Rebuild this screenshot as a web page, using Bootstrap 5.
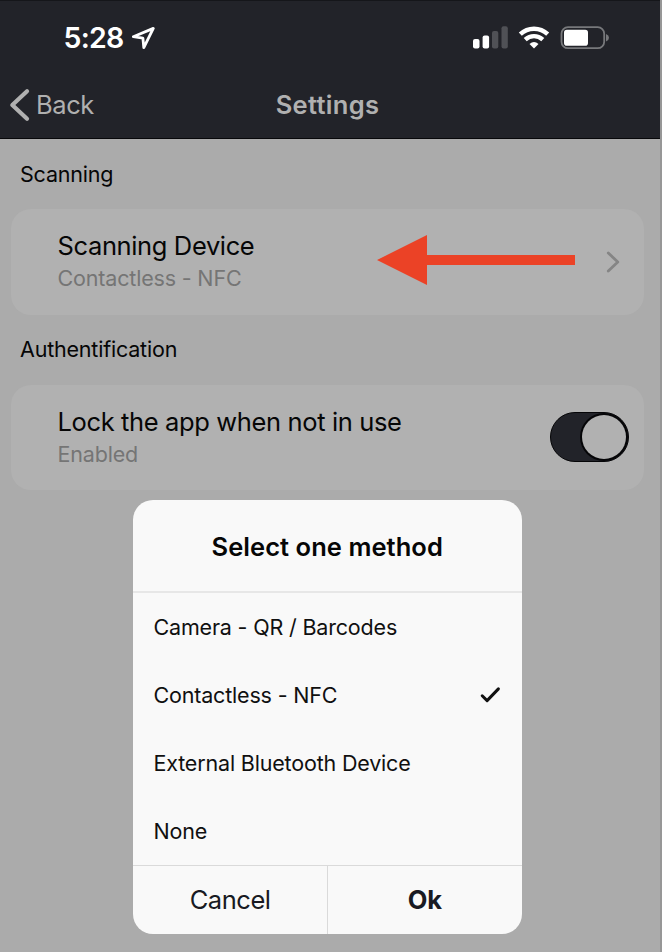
<!DOCTYPE html>
<html lang="en">
<head>
<meta charset="utf-8">
<meta name="viewport" content="width=device-width, initial-scale=1">
<title>Settings</title>
<link href="https://cdn.jsdelivr.net/npm/bootstrap@5.3.0/dist/css/bootstrap.min.css" rel="stylesheet">
<style>
  body { font-family: Inter, "Liberation Sans", sans-serif; background: #ababab; color: #060606; overflow: hidden; }
  .screen { height: 952px; border-right: 2px solid #979797; }
  .topbar { height: 139px; background: #222329; border-top: 1px solid #15161a; border-bottom: 1px solid #08080a; }
  .status { height: 73px; padding: 0 51px 0 63.5px; color: #fff; }
  .clock { font-size: 28.5px; line-height: 40px; font-weight: 600; letter-spacing: -.75px; }
  .indicators { gap: 9px; }
  .titlebar { height: 62px; grid-template-columns: 1fr auto 1fr; padding: 0 14px 0 9px; color: #b0b0b0; line-height: 40px; }
  .titlebar .back { font-size: 25.5px; letter-spacing: -.4px; }
  .titlebar .back span { padding-left: 6px; }
  .titlebar h1 { font-size: 25.5px; line-height: 40px; font-weight: 600; letter-spacing: .32px; }
  .section-label { height: 70px; padding: 0 20px; font-size: 21.5px; letter-spacing: -.2px; }
  .option { height: 105.5px; margin: 0 16px 0 10.5px; padding: 0 15.5px 0 47px; background: #b1b1b1; border-radius: 20px; }
  .option h2 { font-size: 25.5px; line-height: 33px; font-weight: 400; letter-spacing: -.37px; }
  .option p { font-size: 21.5px; line-height: 32px; color: #757575; letter-spacing: -.17px; }
  .option .chevron { margin-right: 6px; }
  .toggle { width: 79px; height: 50px; margin-bottom: 1px; border-radius: 25px; background: #222329; border: 1.5px solid #050507; padding-right: 1.5px; }
  .knob { width: 44.5px; height: 44.5px; border-radius: 50%; background: #b1b1b1; box-shadow: 0 0 0 2px #050507; }
  .pointer { left: 377px; top: 235px; }
  .dialog { left: 133px; top: 500px; width: 388.5px; height: 434px; background: #f9f9f9; border-radius: 20px; overflow: hidden; }
  .dialog h3 { height: 93px; padding-top: 3px; font-size: 25.5px; font-weight: 600; border-bottom: 2px solid #e7e7e7; letter-spacing: .05px; }
  .choice { height: 68.25px; padding: 0 21px 1px 20.5px; font-size: 21.5px; color: #101010; letter-spacing: -.18px; }
  .actions { border-top: 1px solid #dadada; margin-top: -1px; }
  .actions button { font-size: 25.5px; background: none; border: 0; color: #181a22; letter-spacing: -.45px; }
  .actions button + button { border-left: 1px solid #dadada; font-weight: 700; letter-spacing: 0; }
</style>
</head>
<body>
<div class="screen position-relative">
  <header class="topbar">
    <div class="status d-flex align-items-center">
      <span class="clock">5:28</span>
      <svg class="ms-1 ps-1" width="28" height="24" viewBox="0 0 24 24" fill="none" stroke="#fff" stroke-width="2.8" stroke-linejoin="round"><path d="M21.3 2.400 1.300 10.700l9.600 1.400.9 9.600z"/></svg>
      <div class="indicators d-flex align-items-center ms-auto">
        <svg width="36" height="24" viewBox="0 0 36 24"><g fill="#fff"><rect y="13" width="6.500" height="9.500" rx="2"/><rect x="9.600" y="9.500" width="6.500" height="13" rx="2"/></g><g fill="#505156"><rect x="19" y="5" width="6.300" height="17.500" rx="2"/><rect x="28.500" y=".3" width="6.300" height="22.200" rx="2"/></g></svg>
        <svg width="32" height="24" viewBox="0 0 32 24"><g fill="none" stroke="#fff" stroke-width="4.400"><path d="M2.300 8.200C10 .9 22 .9 29.700 8.200"/><path d="M7.200 13.700c5.200-4.800 12.400-4.800 17.600 0"/></g><path d="M11.500 18q4.500-3.800 9 0L16 22.500z" fill="#fff"/></svg>
        <svg width="50" height="24" viewBox="0 0 50 24"><rect x="2.500" y="1.200" width="42.700" height="21" rx="6.500" fill="none" stroke="#77787b" stroke-width="1.800"/><rect x="5" y="3.700" width="24" height="16" rx="2.800" fill="#fff"/><path d="M47 8v7.500q3-1.200 3-3.700t-3-3.800z" fill="#77787b"/></svg>
      </div>
    </div>
    <nav class="titlebar d-grid align-items-center">
      <a class="back d-flex align-items-center text-reset text-decoration-none" href="#">
        <svg width="21" height="34" viewBox="0 0 21 34" fill="none" stroke="#b0b0b0" stroke-width="4.200" stroke-linecap="round" stroke-linejoin="round"><path d="M18 3.300 3.300 17 18 30.700"/></svg>
        <span>Back</span>
      </a>
      <h1 class="m-0">Settings</h1>
    </nav>
  </header>
  <main>
    <div class="section-label d-flex align-items-center"><span>Scanning</span></div>
    <section class="option d-flex align-items-center justify-content-between">
      <div><h2 class="m-0">Scanning Device</h2><p class="m-0">Contactless - NFC</p></div>
      <svg class="chevron" width="22" height="24" viewBox="0 0 22 24" fill="none" stroke="#858585" stroke-width="2.800" stroke-linecap="round" stroke-linejoin="round"><path d="m7.300 3 9.500 9-9.500 9"/></svg>
    </section>
    <div class="section-label d-flex align-items-center"><span>Authentification</span></div>
    <section class="option d-flex align-items-center justify-content-between">
      <div><h2 class="m-0">Lock the app when not in use</h2><p class="m-0">Enabled</p></div>
      <div class="toggle d-flex align-items-center justify-content-end" role="switch" aria-checked="true"><div class="knob"></div></div>
    </section>
  </main>
  <svg class="pointer position-absolute" width="199" height="50" viewBox="0 0 199 50"><path d="M0 25 50 0v20h148v10H50v20z" fill="#eb4226"/></svg>
  <div class="dialog position-absolute d-flex flex-column" role="dialog">
    <h3 class="m-0 d-flex align-items-center justify-content-center">Select one method</h3>
    <div class="choice d-flex align-items-center">Camera - QR / Barcodes</div>
    <div class="choice d-flex align-items-center justify-content-between">Contactless - NFC
      <svg width="21" height="17" viewBox="0 0 21 17" fill="none" stroke="#111" stroke-width="3" stroke-linecap="round" stroke-linejoin="round"><path d="m2.200 9.800 4.900 4.800L18.400 2.900"/></svg>
    </div>
    <div class="choice d-flex align-items-center">External Bluetooth Device</div>
    <div class="choice d-flex align-items-center">None</div>
    <div class="actions d-flex flex-fill"><button class="w-50" type="button">Cancel</button><button class="w-50" type="button">Ok</button></div>
  </div>
</div>
<script src="https://cdn.jsdelivr.net/npm/bootstrap@5.3.0/dist/js/bootstrap.bundle.min.js"></script>
</body>
</html>
